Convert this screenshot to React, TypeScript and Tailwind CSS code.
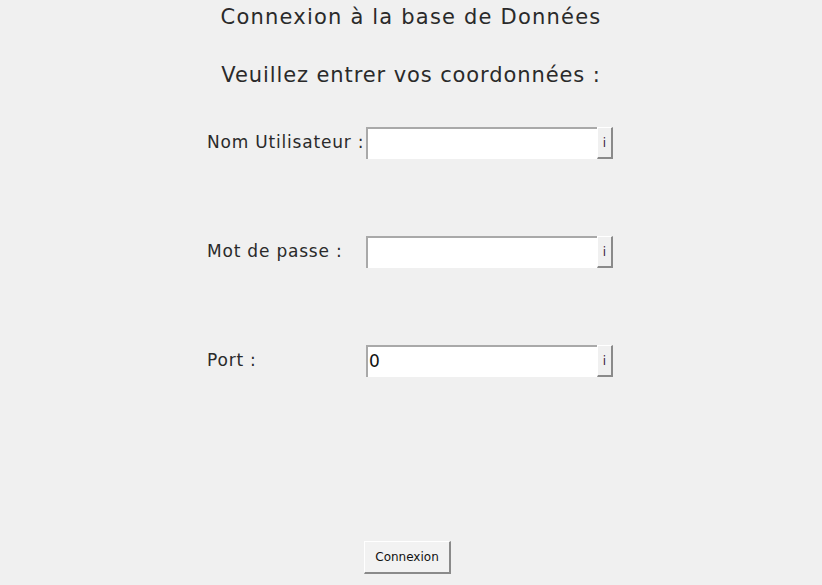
const gothic = { fontFamily: '"DejaVu Sans", sans-serif' }

function Field({ label, value }: { label: string; value?: string }) {
  return (
    <div className="flex items-center h-[32px]">
      <div className="w-[159px] text-[17px] tracking-[0.8px] text-[#2a2a2a] whitespace-nowrap" style={gothic}>
        {label}
      </div>
      <div className="flex h-[32px]">
        <div className="w-[231px] h-full bg-white border-l-2 border-t-2 border-[#a9a9a9] flex items-center px-[1px] text-[17px] text-[#111]" style={gothic}>
          {value}
        </div>
        <div className="w-[16px] h-full bg-[#f0f0f0] border-t border-l border-white border-r-2 border-b-2 border-r-[#8a8a8a] border-b-[#8a8a8a] flex items-center justify-center text-[12px] text-[#3a1a3a] font-['DejaVu_Sans',sans-serif]">
          i
        </div>
      </div>
    </div>
  )
}

export default function App() {
  return (
    <div className="w-[822px] h-[585px] bg-[#f0f0f0] flex flex-col items-center overflow-hidden">
      <div className="pt-[3px] text-[21px] tracking-[1.2px] leading-[28px] text-[#2a2a2a]" style={gothic}>
        Connexion à la base de Données
      </div>
      <div className="mt-[30px] text-[21px] tracking-[0.9px] leading-[28px] text-[#2a2a2a]" style={gothic}>
        Veuillez entrer vos coordonnées :
      </div>
      <div className="mt-[38px] mr-[2px] flex flex-col gap-[77px]">
        <Field label="Nom Utilisateur :" />
        <Field label="Mot de passe :" />
        <Field label="Port :" value="0" />
      </div>
      <button className="mt-[164px] mr-[7px] w-[87px] h-[33px] bg-[#f2f2f2] border-t border-l border-white border-r-2 border-b-2 border-r-[#8a8a8a] border-b-[#8a8a8a] text-[12px] text-[#111] font-['DejaVu_Sans',sans-serif]">
        Connexion
      </button>
    </div>
  )
}
